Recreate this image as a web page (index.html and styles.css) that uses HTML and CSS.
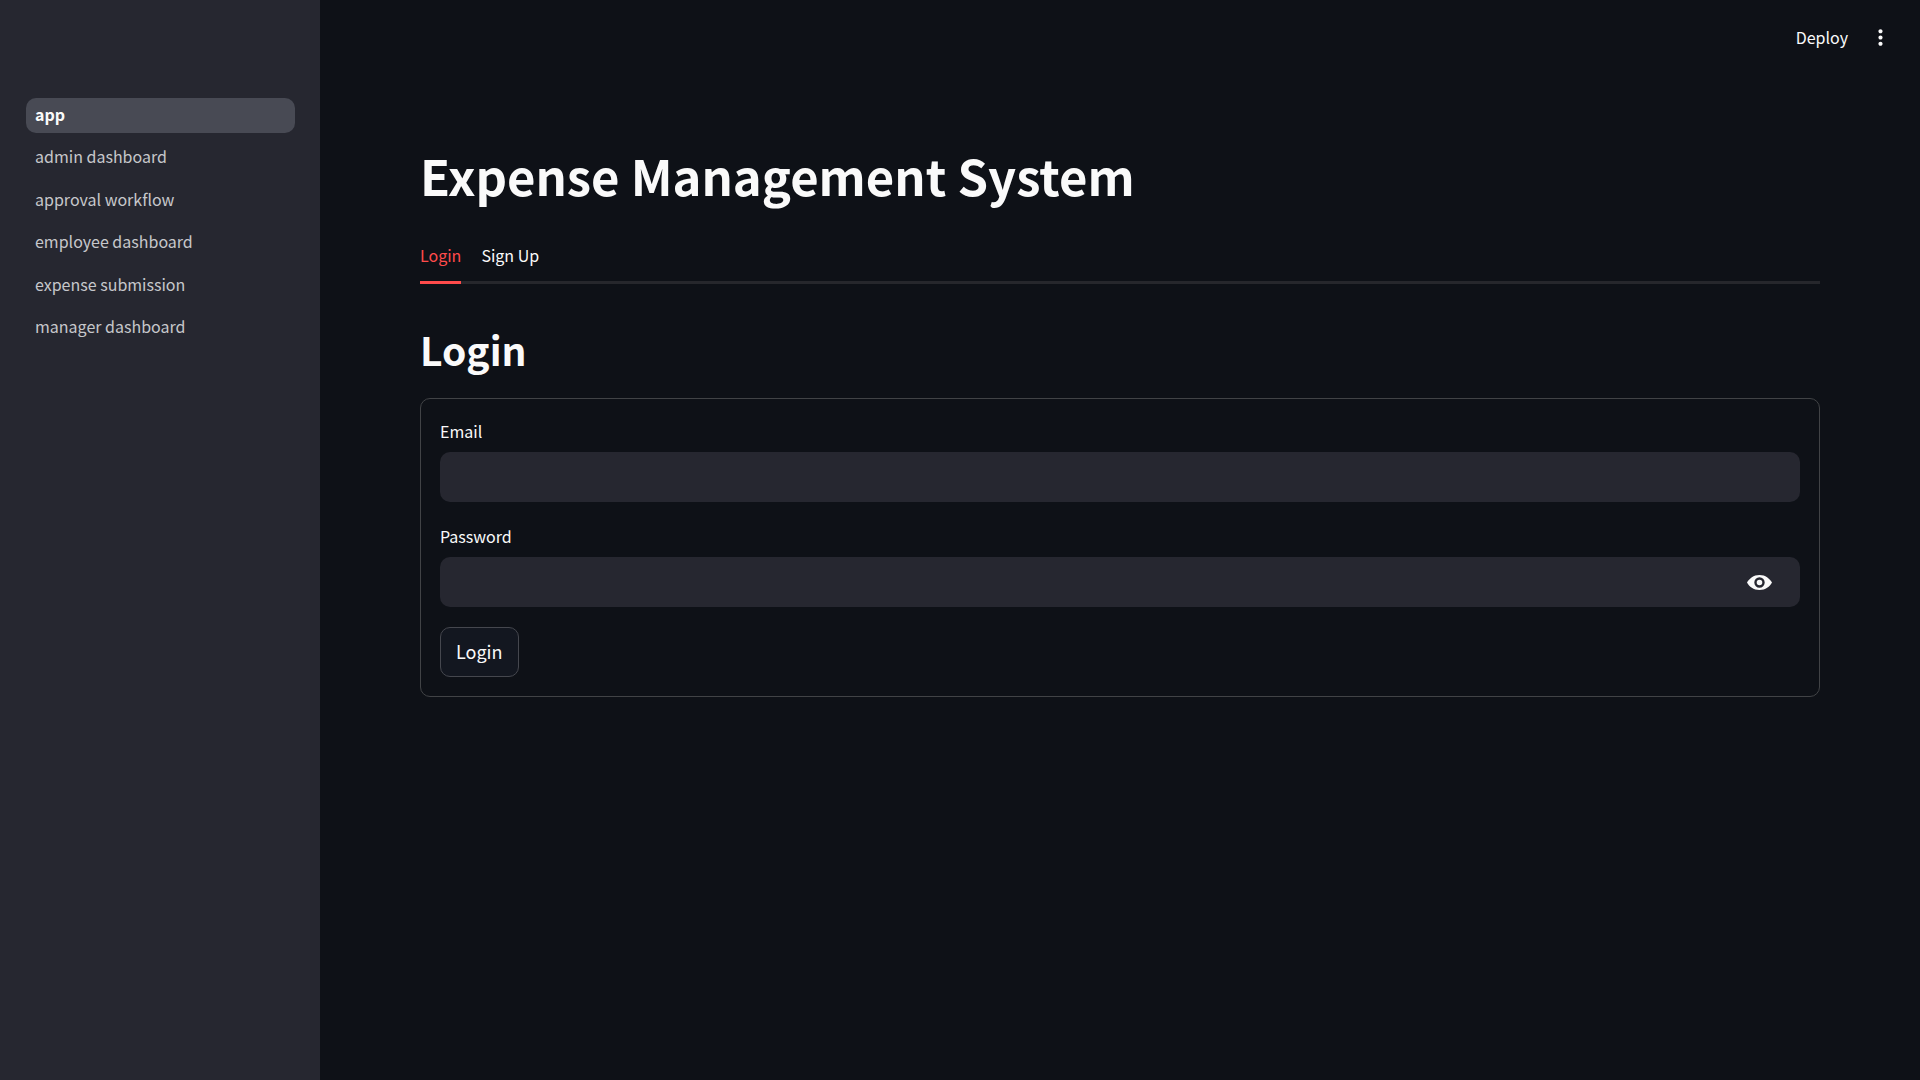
FILE: index.html
```html
<!DOCTYPE html>
<html lang="en">
<head>
<meta charset="utf-8">
<title>Expense Management System</title>
<link rel="stylesheet" href="styles.css">
</head>
<body>
<div class="app">
  <nav class="sidebar" aria-label="Pages">
    <ul class="nav-list">
      <li><a class="nav-link nav-link-active" href="#app" aria-current="page">app</a></li>
      <li><a class="nav-link" href="#admin">admin dashboard</a></li>
      <li><a class="nav-link" href="#approval">approval workflow</a></li>
      <li><a class="nav-link" href="#employee">employee dashboard</a></li>
      <li><a class="nav-link" href="#expense">expense submission</a></li>
      <li><a class="nav-link" href="#manager">manager dashboard</a></li>
    </ul>
  </nav>
  <div class="page">
    <header class="toolbar">
      <button class="deploy" type="button">Deploy</button>
      <button class="icon-button" type="button" aria-label="Main menu">
        <svg class="menu-icon" viewBox="0 0 24 24"><path d="M12 8c1.1 0 2-.9 2-2s-.9-2-2-2-2 .9-2 2 .9 2 2 2zm0 2c-1.1 0-2 .9-2 2s.9 2 2 2 2-.9 2-2-.9-2-2-2zm0 6c-1.1 0-2 .9-2 2s.9 2 2 2 2-.9 2-2-.9-2-2-2z"/></svg>
      </button>
    </header>
    <main class="content">
      <h1 class="title">Expense Management System</h1>
      <div class="tabs" role="tablist">
        <button class="tab tab-active" type="button" role="tab" aria-selected="true">Login</button>
        <button class="tab" type="button" role="tab" aria-selected="false">Sign Up</button>
      </div>
      <h2 class="heading">Login</h2>
      <form class="card">
        <div class="field">
          <label class="label" for="email">Email</label>
          <div class="input-box"><input class="input" id="email" type="text"></div>
        </div>
        <div class="field">
          <label class="label" for="password">Password</label>
          <div class="input-box">
            <input class="input" id="password" type="password">
            <button class="reveal" type="button" aria-label="Show password">
              <svg class="eye-icon" viewBox="0 0 25 25"><path fill-rule="evenodd" d="M12.500 5C6.500 5 2.300 8.600 0 12.500C2.300 16.600 6.500 20 12.500 20S22.700 16.600 25 12.500C22.700 8.600 18.500 5 12.500 5zM12.500 7.300a5.200 5.200 0 1 1 0 10.400a5.200 5.200 0 1 1 0-10.400zM12.500 9.700a2.800 2.800 0 1 0 0 5.600a2.800 2.800 0 1 0 0-5.600z"/></svg>
            </button>
          </div>
        </div>
        <button class="submit" type="submit">Login</button>
      </form>
    </main>
  </div>
</div>
</body>
</html>
```
FILE: styles.css
```css
* { box-sizing: border-box; }
body {
  margin: 0;
  background: #0e1117;
  color: #fafafa;
  font-family: "Noto Sans CJK SC", "Noto Sans", sans-serif;
  font-size: 16px;
  line-height: 24px;
}
button, input { font: inherit; color: inherit; border: 0; margin: 0; padding: 0; background: none; }
.app { display: flex; min-height: 100vh; }
.sidebar { flex: none; width: 320px; padding: 98px 25px 0 26px; background: #262730; }
.nav-list { list-style: none; margin: 0; padding: 0; display: grid; align-content: space-between; height: 247px; }
.nav-link { display: block; height: 35px; padding: 0 9px; border-radius: 10px; line-height: 33px; color: #c6c7cb; text-decoration: none; }
.nav-link-active { background: #484a54; color: #fafafa; font-weight: 700; }
.page { flex: 1; min-width: 0; }
.toolbar { display: flex; align-items: center; justify-content: flex-end; gap: 20px; height: 75px; padding: 0 27px; }
.deploy { padding-bottom: 2px; }
.icon-button { display: flex; }
.menu-icon { width: 25px; height: 25px; fill: currentColor; }
.content { padding: 60px 100px; }
.title { margin: 0; font-size: 49px; line-height: 80px; font-weight: 700; }
.tabs { display: flex; gap: 20px; height: 50px; margin-top: 19px; border-bottom: 3px solid #26272c; }
.tab { height: 50px; padding-bottom: 5px; border-bottom: 3px solid transparent; }
.tab-active { color: #ff4b4b; border-color: #ff4b4b; }
.heading { margin: 33px 0 17px; font-size: 39px; line-height: 64px; font-weight: 700; }
.card { padding: 18px 19px 19px; border: 1px solid #414346; border-radius: 10px; }
.field { margin-bottom: 20px; }
.label { display: block; height: 30px; margin-bottom: 5px; line-height: 28px; }
.input-box { display: flex; height: 50px; border-radius: 10px; background: #262730; }
.input { flex: 1; min-width: 0; padding: 0 15px; outline: 0; }
.reveal { display: flex; align-items: center; padding: 0 28px; }
.eye-icon { width: 25px; height: 25px; fill: currentColor; }
.submit { height: 50px; padding: 0 15px 3px; border: 1px solid #45474e; border-radius: 10px; background: #131720; font-size: 18px; }
```
